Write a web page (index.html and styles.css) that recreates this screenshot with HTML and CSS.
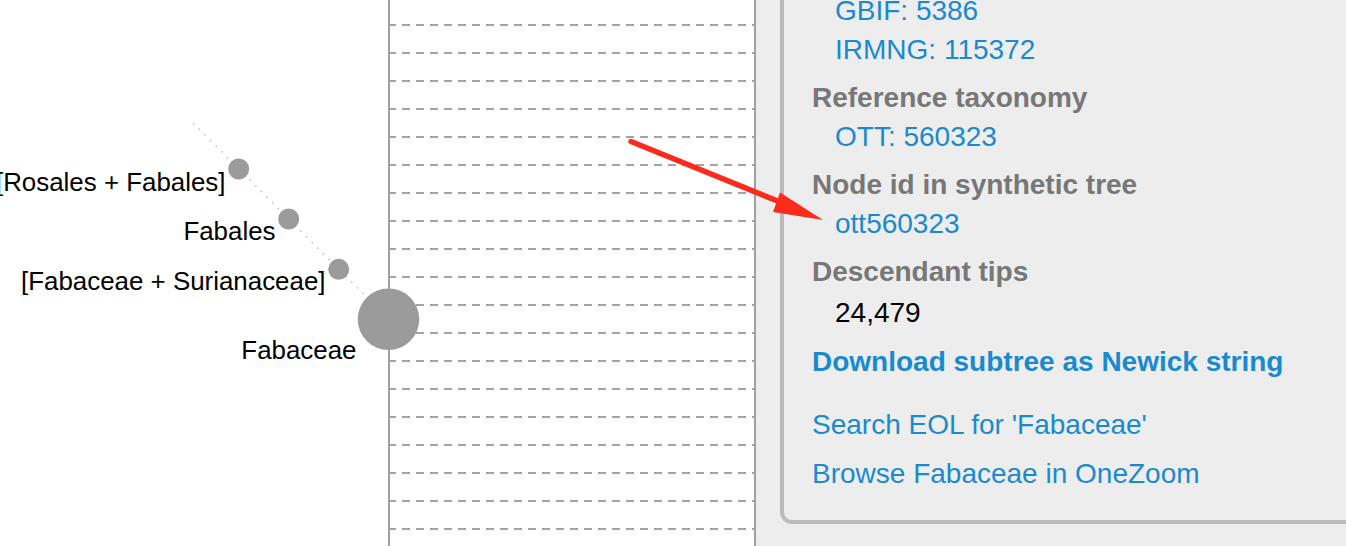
FILE: index.html
```html
<!DOCTYPE html>
<html lang="en">
<head>
<meta charset="utf-8">
<title>Fabaceae – synthetic tree</title>
<link rel="stylesheet" href="styles.css">
</head>
<body>
<div class="page">
  <section class="tree">
    <div class="tree-left"></div>
    <div class="grid">
      <div class="row"></div><div class="row"></div><div class="row"></div><div class="row"></div>
      <div class="row"></div><div class="row"></div><div class="row"></div><div class="row"></div>
      <div class="row"></div><div class="row"></div><div class="row"></div><div class="row"></div>
      <div class="row"></div><div class="row"></div><div class="row"></div><div class="row"></div>
      <div class="row"></div><div class="row"></div><div class="row"></div><div class="row"></div>
    </div>
    <svg class="tree-canvas" width="756" height="546" viewBox="0 0 756 546" aria-label="tree">
      <line class="edge" x1="193" y1="123" x2="388.5" y2="319"></line>
      <circle class="node" cx="238.7" cy="169" r="10.5"></circle>
      <circle class="node" cx="288.7" cy="219" r="10.5"></circle>
      <circle class="node" cx="338.7" cy="269.3" r="10.5"></circle>
      <circle class="node" cx="388.5" cy="319.2" r="30.8"></circle>
      <text class="label" x="225.5" y="190.5">[Rosales + Fabales]</text>
      <text class="label" x="275.5" y="240">Fabales</text>
      <text class="label" x="325.5" y="290">[Fabaceae + Surianaceae]</text>
      <text class="label" x="356.5" y="359.3">Fabaceae</text>
    </svg>
  </section>
  <aside class="side">
    <div class="panel">
      <dl class="info">
        <dd><a href="#">GBIF: 5386</a></dd>
        <dd><a href="#">IRMNG: 115372</a></dd>
        <dt>Reference taxonomy</dt>
        <dd><a href="#">OTT: 560323</a></dd>
        <dt>Node id in synthetic tree</dt>
        <dd><a href="#">ott560323</a></dd>
        <dt>Descendant tips</dt>
        <dd class="num">24,479</dd>
      </dl>
      <p class="download"><a href="#">Download subtree as Newick string</a></p>
      <ul class="links">
        <li><a href="#">Search EOL for 'Fabaceae'</a></li>
        <li><a href="#">Browse Fabaceae in OneZoom</a></li>
      </ul>
    </div>
  </aside>
  <svg class="arrow" width="1346" height="546" viewBox="0 0 1346 546" aria-hidden="true">
    <line x1="631" y1="141.5" x2="785" y2="204" stroke="#fc2b1d" stroke-width="5.5" stroke-linecap="round"></line>
    <polygon points="823,220 780,192.5 773,212" fill="#fc2b1d"></polygon>
  </svg>
</div>
</body>
</html>
```

FILE: styles.css
```css
* { box-sizing: border-box; }

html, body {
  margin: 0;
  padding: 0;
}

body {
  font-family: "Liberation Sans", Arial, Helvetica, sans-serif;
  background: #ededed;
  overflow: hidden;
}

.page {
  position: relative;
  display: flex;
  width: 1346px;
  height: 546px;
  overflow: hidden;
}

/* ---------- tree ---------- */
.tree {
  position: relative;
  flex: none;
  display: flex;
  width: 756px;
  height: 546px;
  background: #ffffff;
}

.tree-left {
  width: 388px;
  flex: none;
}

.grid {
  width: 368px;
  flex: none;
  border-left: 2px solid #a0a0a0;
  border-right: 2px solid #a0a0a0;
  display: flex;
  flex-direction: column;
}

.row {
  flex: none;
  height: 28px;
  background-image: repeating-linear-gradient(90deg, #a4a4a4 0 6px, transparent 6px 12px, #a4a4a4 12px 14px);
  background-size: 100% 2px;
  background-position: 0 24px;
  background-repeat: no-repeat;
}

.tree-canvas {
  position: absolute;
  left: 0;
  top: 0;
}

.edge {
  stroke: #c4c4c4;
  stroke-width: 1.6;
  stroke-dasharray: 1.6 6.4;
}

.node {
  fill: #9b9b9b;
}

.label {
  font-family: "Liberation Sans", Arial, Helvetica, sans-serif;
  font-size: 25.9px;
  fill: #000000;
  text-anchor: end;
}

/* ---------- side panel ---------- */
.side {
  flex: 1;
  background: #ededed;
  padding-left: 24px;
}

.panel {
  display: flow-root;
  height: 524px;
  border-left: 4px solid #bbbbbb;
  border-bottom: 4px solid #bbbbbb;
  border-bottom-left-radius: 12px;
  padding-left: 28px;
  font-size: 28px;
  line-height: 39.5px;
}

.panel a {
  color: #1a8ad0;
  text-decoration: none;
}

.info {
  margin: -9.5px 0 0 0;
}

.info dt {
  margin-top: 8px;
  font-weight: bold;
  color: #777777;
}

.info dd {
  margin: 0 0 0 23px;
}

.info dd.num {
  color: #000000;
  margin-top: 1.5px;
}

.download {
  margin: 9.5px 0 0 0;
  font-weight: bold;
}

.links {
  list-style: none;
  margin: 24px 0 0 0;
  padding: 0;
}

.links li + li {
  margin-top: 9.5px;
}

/* ---------- annotation arrow ---------- */
.arrow {
  position: absolute;
  left: 0;
  top: 0;
  pointer-events: none;
}
```
